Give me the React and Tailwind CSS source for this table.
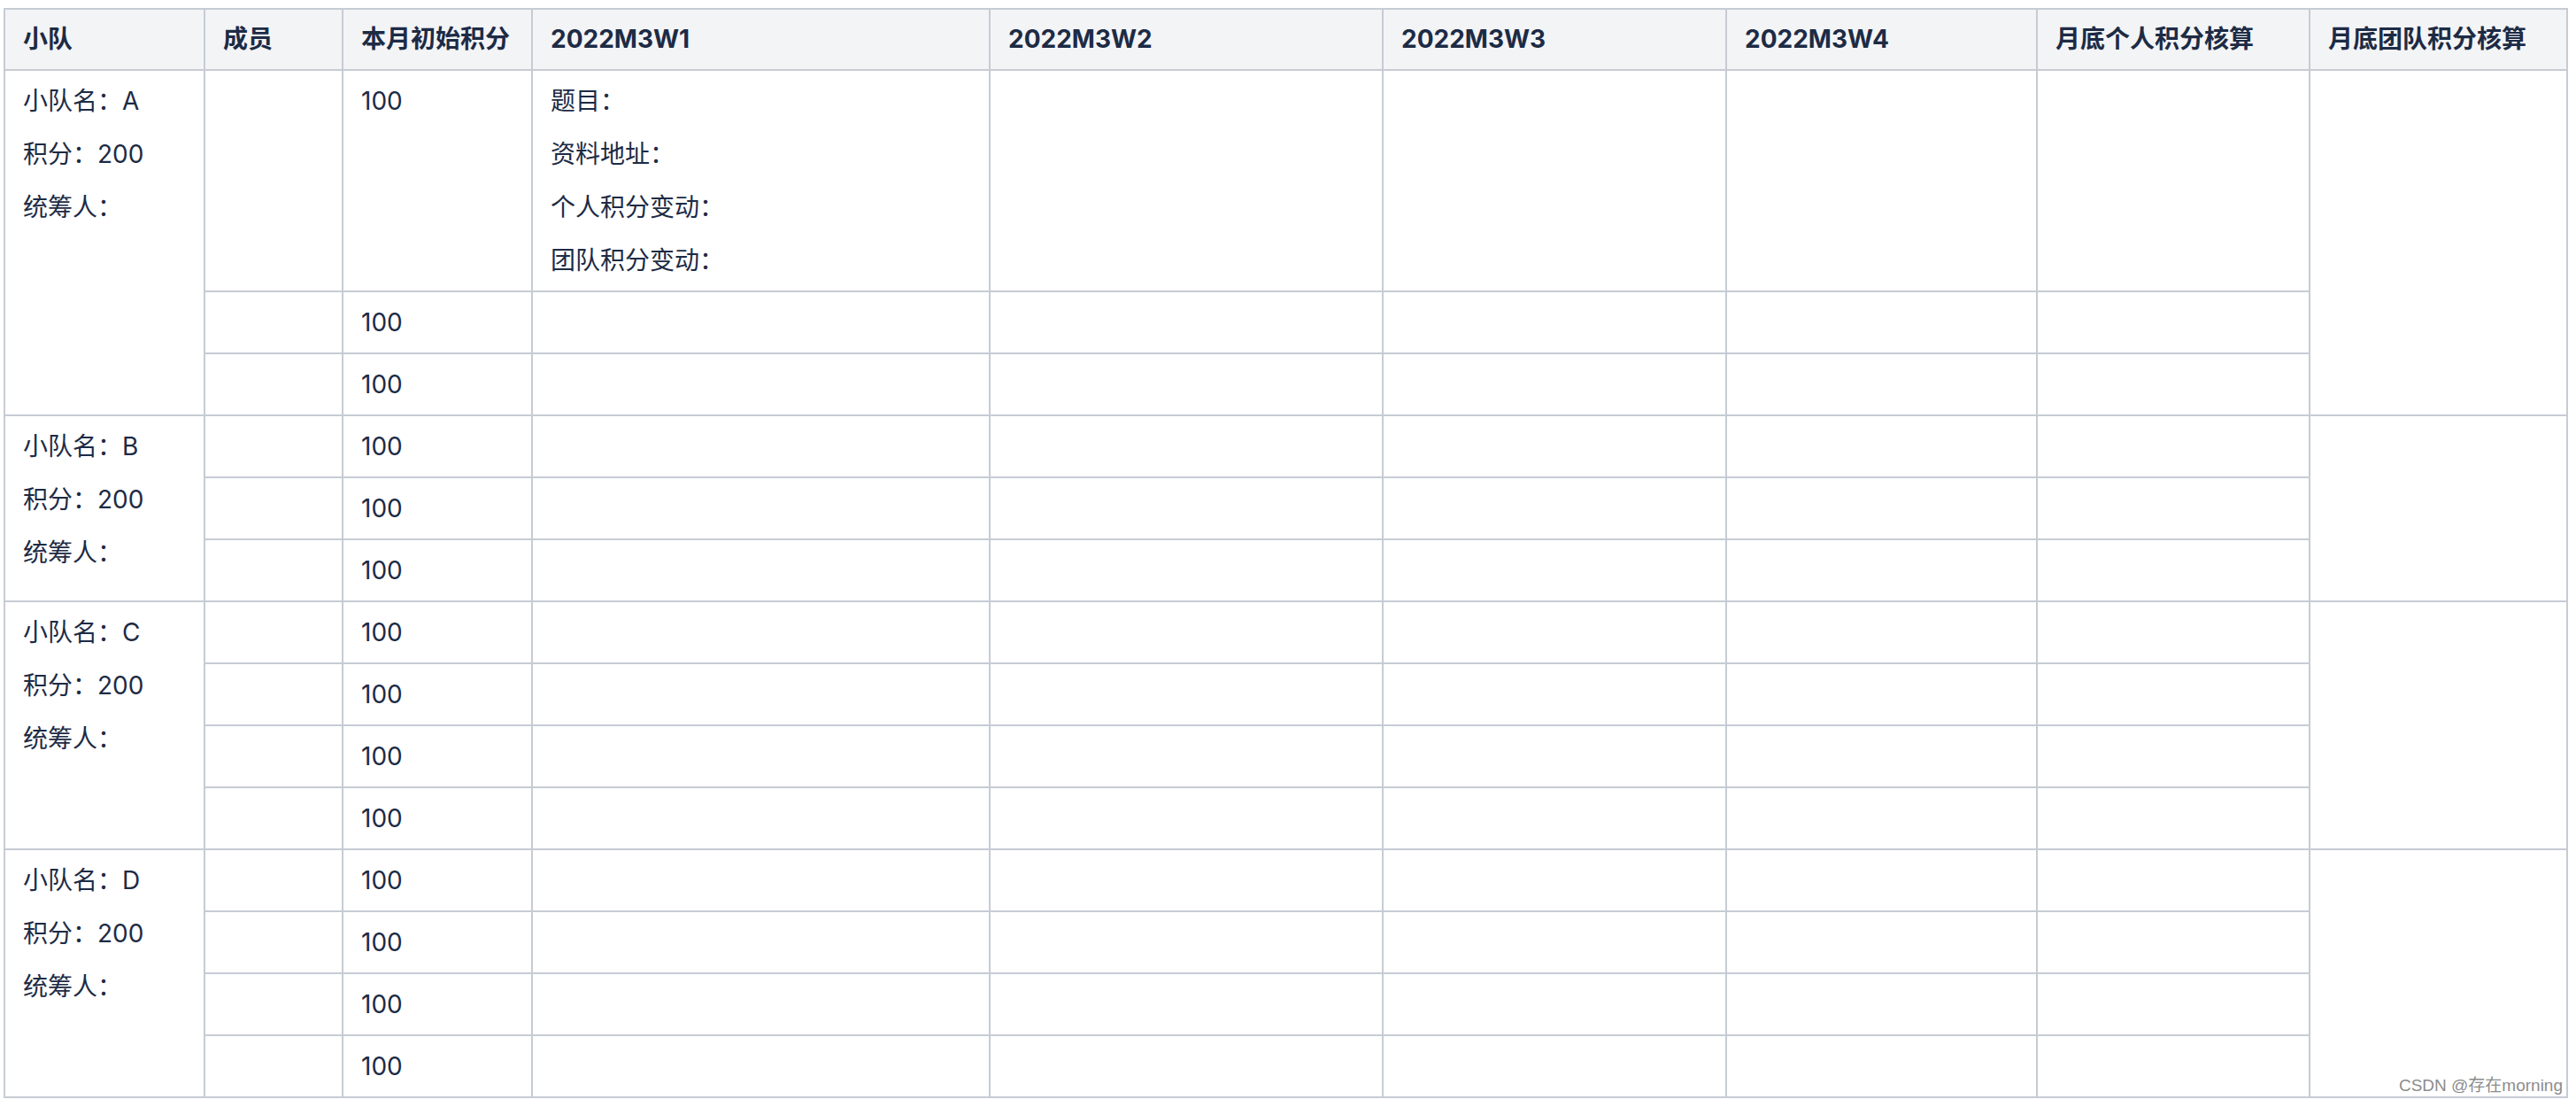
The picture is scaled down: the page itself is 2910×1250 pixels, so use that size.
import React from 'react';

const teams = [
    { name: 'A', score: 200, members: 3 },
    { name: 'B', score: 200, members: 3 },
    { name: 'C', score: 200, members: 4 },
    { name: 'D', score: 200, members: 4 },
];

const headers = ['小队', '成员', '本月初始积分', '2022M3W1', '2022M3W2', '2022M3W3', '2022M3W4', '月底个人积分核算', '月底团队积分核算'];
const widths = ['w-[226px]', 'w-[156px]', 'w-[214px]', 'w-[517px]', 'w-[444px]', 'w-[388px]', 'w-[351px]', 'w-[308px]', 'w-[291px]'];

const cell = 'border-2 border-[#c6ccd4] px-[20px] py-[4px] align-top';

const App = () => {
    return (
        <div className="min-h-screen bg-white pl-[4px] pt-[9px] font-['Inter','Noto_Sans_CJK_SC',sans-serif] text-[28px] leading-[60px] text-[#1d2b45]">
            <div className="relative w-[2897px]">
                <table className="w-[2897px] table-fixed border-collapse">
                    <colgroup>
                        {widths.map((w, i) => (
                            <col key={i} className={w} />
                        ))}
                    </colgroup>
                    <thead>
                        <tr className="bg-[#f3f4f6]">
                            {headers.map((h) => (
                                <th key={h} className={`${cell} text-left font-bold leading-[59px]`}>
                                    {h}
                                </th>
                            ))}
                        </tr>
                    </thead>
                    <tbody>
                        {teams.map((team, ti) =>
                            Array.from({ length: team.members }).map((_, mi) => (
                                <tr key={`${ti}-${mi}`}>
                                    {mi === 0 && (
                                        <td rowSpan={team.members} className={cell}>
                                            <div>小队名：{team.name}</div>
                                            <div>积分：{team.score}</div>
                                            <div>统筹人：</div>
                                        </td>
                                    )}
                                    <td className={cell}></td>
                                    <td className={cell}>100</td>
                                    <td className={cell}>
                                        {ti === 0 && mi === 0 && (
                                            <>
                                                <div>题目：</div>
                                                <div>资料地址：</div>
                                                <div>个人积分变动：</div>
                                                <div>团队积分变动：</div>
                                            </>
                                        )}
                                    </td>
                                    <td className={cell}></td>
                                    <td className={cell}></td>
                                    <td className={cell}></td>
                                    <td className={cell}></td>
                                    {mi === 0 && <td rowSpan={team.members} className={cell}></td>}
                                </tr>
                            ))
                        )}
                    </tbody>
                </table>
                <span className="absolute right-[6px] bottom-[3px] font-['Liberation_Sans','Noto_Sans_CJK_SC',sans-serif] text-[19px] leading-[22px] text-[#8c8c8c]">
                    CSDN @存在morning
                </span>
            </div>
        </div>
    );
};

export default App;
